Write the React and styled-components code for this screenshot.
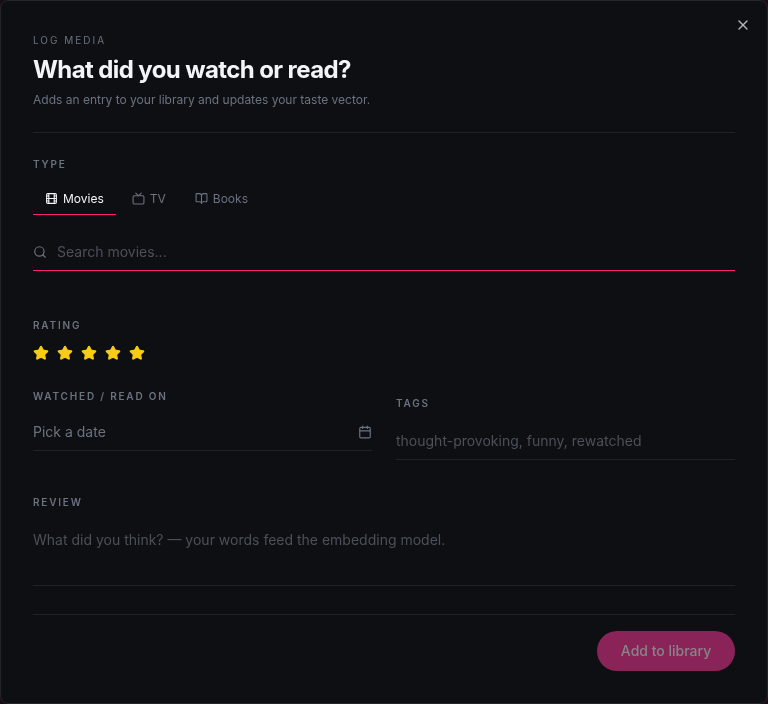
import React from 'react';
import styled, { createGlobalStyle } from 'styled-components';
import { BookOpen, Calendar, Film, Search, Star, Tv, X } from 'lucide-react';

const GlobalStyle = createGlobalStyle`
  html, body {
    margin: 0;
    background: #1a0d12;
  }
  * {
    box-sizing: border-box;
  }
  input, textarea, button {
    font-family: inherit;
  }
`;

const Dialog = styled.div`
  position: relative;
  width: 768px;
  height: 704px;
  padding: 32px;
  background: #0d0f13;
  border: 1px solid #23252b;
  border-radius: 8px;
  font-family: Inter, "Liberation Sans", sans-serif;
  color: #f3f4f6;
  overflow: hidden;
  will-change: transform;
`;

const CloseButton = styled.button`
  position: absolute;
  top: 16px;
  right: 16px;
  width: 16px;
  height: 16px;
  padding: 0;
  display: flex;
  background: none;
  border: 0;
  color: #b4b6bb;
`;

const Header = styled.header`
  padding-bottom: 24px;
  border-bottom: 1px solid #202228;
`;

const Eyebrow = styled.div`
  font-size: 10px;
  line-height: 15px;
  letter-spacing: 0.2em;
  color: #6b7280;
`;

const Title = styled.h1`
  margin: 6px 0 0;
  font-size: 24px;
  line-height: 32px;
  font-weight: 700;
  letter-spacing: -0.025em;
  color: #f3f4f6;
`;

const Description = styled.p`
  margin: 6px 0 0;
  font-size: 12px;
  line-height: 16px;
  color: #6b7280;
`;

const FieldLabel = styled.div`
  font-size: 10px;
  line-height: 15px;
  font-weight: 600;
  letter-spacing: 0.18em;
  color: #6b7280;
`;

const TypeSection = styled.section`
  margin-top: 24px;
`;

const Tabs = styled.div`
  display: flex;
  margin-top: 10px;
`;

const Tab = styled.button`
  display: flex;
  align-items: center;
  gap: 5px;
  height: 33px;
  padding: 0 12px;
  background: none;
  border: 0;
  border-bottom: 1px solid ${(p) => (p.$active ? '#ff1f7a' : 'transparent')};
  font-size: 12px;
  color: ${(p) => (p.$active ? '#f3f4f6' : '#6b7280')};
  & + & {
    padding: 0 13px 0 16px;
  }
`;

const SearchBar = styled.div`
  display: flex;
  align-items: center;
  gap: 10px;
  height: 40px;
  margin-top: 16px;
  padding-top: 2px;
  color: #6b7280;
  border-bottom: 1px solid #ff1f7a;
`;

const SearchText = styled.span`
  font-size: 14px;
  color: #4b5059;
`;

const RatingSection = styled.section`
  margin-top: 47px;
`;

const Stars = styled.div`
  display: flex;
  gap: 8px;
  margin-top: 12px;
  color: #facc15;
`;

const TwoColumns = styled.div`
  display: grid;
  grid-template-columns: 1fr 1fr;
  gap: 24px;
  margin-top: 28px;
`;

const Field = styled.div`
  margin-top: ${(p) => p.$offset || 0}px;
`;

const DateField = styled.div`
  display: flex;
  align-items: center;
  justify-content: space-between;
  height: 37px;
  margin-top: 10px;
  padding-bottom: 1px;
  border-bottom: 1px solid #202228;
  font-size: 14px;
  color: #6b7280;
`;

const TagsField = styled.div`
  display: flex;
  align-items: center;
  height: 39px;
  margin-top: 10px;
  border-bottom: 1px solid #202228;
  font-size: 14px;
  color: #4b5059;
`;

const ReviewSection = styled.section`
  margin-top: 35px;
`;

const ReviewBox = styled.div`
  height: 68px;
  padding-top: 12px;
  margin-top: 8px;
  border-bottom: 1px solid #202228;
  font-size: 14px;
  line-height: 20px;
  color: #4b5059;
`;

const Footer = styled.footer`
  display: flex;
  justify-content: flex-end;
  margin-top: 28px;
  padding-top: 16px;
  border-top: 1px solid #202228;
`;

const SubmitButton = styled.button`
  width: 138px;
  height: 40px;
  padding-bottom: 2px;
  background: #8a2458;
  border: 0;
  border-radius: 20px;
  font-size: 14px;
  font-weight: 500;
  color: #86858a;
`;

export default function App() {
  return (
    <>
      <GlobalStyle />
      <Dialog>
        <CloseButton aria-label="Close">
          <X size={16} />
        </CloseButton>
        <Header>
          <Eyebrow>LOG MEDIA</Eyebrow>
          <Title>What did you watch or read?</Title>
          <Description>Adds an entry to your library and updates your taste vector.</Description>
        </Header>

        <TypeSection>
          <FieldLabel>TYPE</FieldLabel>
          <Tabs>
            <Tab $active>
              <Film size={13} />
              Movies
            </Tab>
            <Tab>
              <Tv size={13} />
              TV
            </Tab>
            <Tab>
              <BookOpen size={13} />
              Books
            </Tab>
          </Tabs>
        </TypeSection>

        <SearchBar>
          <Search size={14} />
          <SearchText>Search movies...</SearchText>
        </SearchBar>

        <RatingSection>
          <FieldLabel>RATING</FieldLabel>
          <Stars>
            {[1, 2, 3, 4, 5].map((n) => (
              <Star key={n} size={16} fill="currentColor" />
            ))}
          </Stars>
        </RatingSection>

        <TwoColumns>
          <Field>
            <FieldLabel>WATCHED / READ ON</FieldLabel>
            <DateField>
              Pick a date
              <Calendar size={14} />
            </DateField>
          </Field>
          <Field $offset={7}>
            <FieldLabel>TAGS</FieldLabel>
            <TagsField>thought-provoking, funny, rewatched</TagsField>
          </Field>
        </TwoColumns>

        <ReviewSection>
          <FieldLabel>REVIEW</FieldLabel>
          <ReviewBox>What did you think? — your words feed the embedding model.</ReviewBox>
        </ReviewSection>

        <Footer>
          <SubmitButton>Add to library</SubmitButton>
        </Footer>
      </Dialog>
    </>
  );
}
